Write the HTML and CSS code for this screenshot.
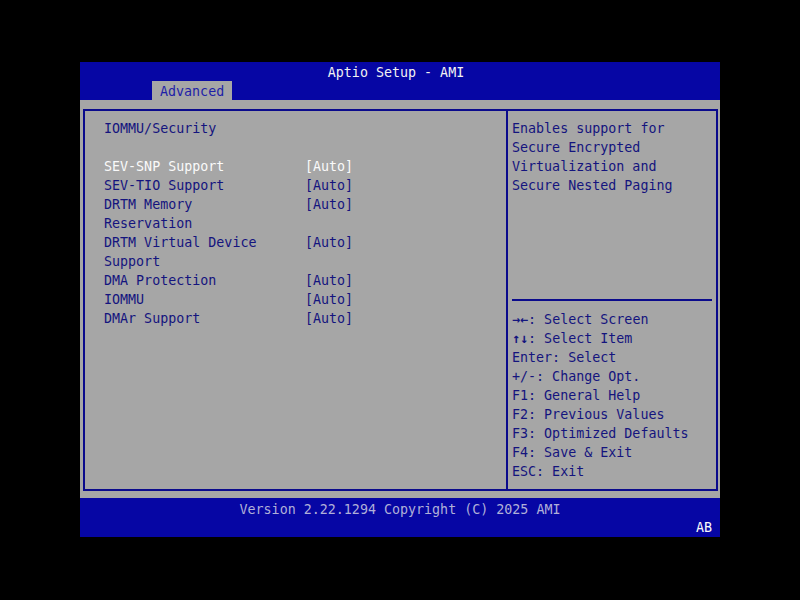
FILE: index.html
```html
<!DOCTYPE html>
<html lang="en">
<head>
    <meta charset="UTF-8">
    <title>Aptio Setup - AMI</title>
    <link rel="stylesheet" href="styles.css">
</head>
<body>
    <div class="screen">
        <div class="header">
            <div class="title">Aptio Setup - AMI</div>
            <div class="tabs">
                <span class="tab active">Advanced</span>
            </div>
        </div>

        <div class="main">
            <div class="frame">
                <div class="left">
                    <div class="line heading">IOMMU/Security</div>
                    <div class="line"></div>
                    <div class="item selected">
                        <span class="name">SEV-SNP Support</span>
                        <span class="value">[Auto]</span>
                    </div>
                    <div class="item">
                        <span class="name">SEV-TIO Support</span>
                        <span class="value">[Auto]</span>
                    </div>
                    <div class="item">
                        <span class="name">DRTM Memory Reservation</span>
                        <span class="value">[Auto]</span>
                    </div>
                    <div class="item">
                        <span class="name">DRTM Virtual Device Support</span>
                        <span class="value">[Auto]</span>
                    </div>
                    <div class="item">
                        <span class="name">DMA Protection</span>
                        <span class="value">[Auto]</span>
                    </div>
                    <div class="item">
                        <span class="name">IOMMU</span>
                        <span class="value">[Auto]</span>
                    </div>
                    <div class="item">
                        <span class="name">DMAr Support</span>
                        <span class="value">[Auto]</span>
                    </div>
                </div>

                <div class="right">
                    <div class="help">
                        <div class="line">Enables support for</div>
                        <div class="line">Secure Encrypted</div>
                        <div class="line">Virtualization and</div>
                        <div class="line">Secure Nested Paging</div>
                    </div>
                    <div class="keys">
                        <div class="line"><b class="arrow">&rarr;&larr;</b>: Select Screen</div>
                        <div class="line"><b class="arrow">&uarr;&darr;</b>: Select Item</div>
                        <div class="line">Enter: Select</div>
                        <div class="line">+/-: Change Opt.</div>
                        <div class="line">F1: General Help</div>
                        <div class="line">F2: Previous Values</div>
                        <div class="line">F3: Optimized Defaults</div>
                        <div class="line">F4: Save &amp; Exit</div>
                        <div class="line">ESC: Exit</div>
                    </div>
                </div>
            </div>
        </div>

        <div class="footer">
            <div class="version">Version 2.22.1294 Copyright (C) 2025 AMI</div>
            <div class="badge">AB</div>
        </div>
    </div>
</body>
</html>
```

FILE: styles.css
```css
html, body {
    margin: 0;
    padding: 0;
    background: #000;
}
body {
    font-family: "DejaVu Sans Mono", "Liberation Mono", monospace;
    font-size: 13.33px;
    line-height: 19px;
    padding: 62px 0 0 80px;
}
.screen {
    width: 640px;
    height: 475px;
    background: #0606a4;
    display: flex;
    flex-direction: column;
}
.header {
    height: 38px;
    flex-shrink: 0;
}
.title {
    height: 19px;
    padding-top: 1px;
    text-align: center;
    padding-right: 8px;
    color: #f2f2f2;
}
.tabs {
    height: 19px;
    margin-top: -1px;
    padding-left: 72px;
    display: flex;
}
.tab {
    padding: 1px 8px 0 8px;
    color: #1e1ea8;
}
.tab.active {
    background: #a6a6a6;
}
.main {
    height: 398px;
    flex-shrink: 0;
    background: #a6a6a6;
    padding: 9px 2px 7px 3px;
    box-sizing: border-box;
}
.frame {
    height: 100%;
    border: 2px solid #0a0a8c;
    box-sizing: border-box;
    display: flex;
}
.left {
    width: 423px;
    box-sizing: border-box;
    padding: 8px 0 0 19px;
    border-right: 2px solid #0a0a8c;
    color: #14147e;
}
.line {
    height: 19px;
    white-space: pre;
}
.item {
    display: grid;
    grid-template-columns: 201px auto;
}
.item .name {
    max-width: 21ch;
}
.item.selected {
    color: #fafafa;
}
.right {
    flex: 1;
    display: flex;
    flex-direction: column;
    padding: 8px 4px 0 4px;
    color: #14147e;
}
.help {
    flex: 1;
    border-bottom: 2px solid #0a0a8c;
}
.keys {
    padding: 9px 0 8px 0;
}
.arrow {
    font-weight: bold;
}
.footer {
    flex: 1;
    min-height: 0;
    padding-top: 2px;
    color: #b0b0d8;
}
.version {
    height: 19px;
    text-align: center;
}
.badge {
    height: 18px;
    line-height: 18px;
    text-align: right;
    padding-right: 8px;
    color: #fafafa;
}
```
